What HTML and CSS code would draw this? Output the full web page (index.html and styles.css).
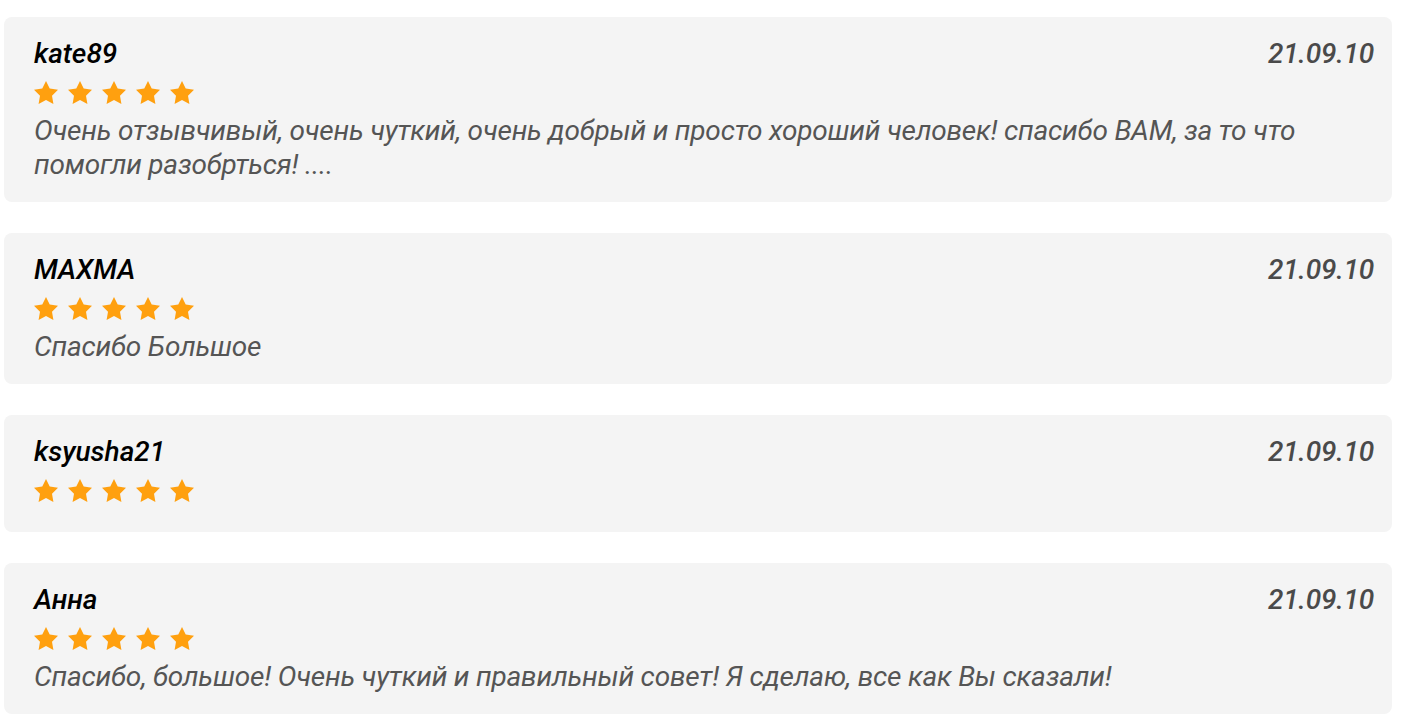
FILE: index.html
```html
<!DOCTYPE html>
<html lang="ru">
<head>
<meta charset="utf-8">
<link rel="stylesheet" href="styles.css">
</head>
<body>
<div class="list">
  <div class="card">
    <div class="head"><span class="name">kate89</span><span class="date">21.09.10</span></div>
    <div class="stars">
      <svg class="star" viewBox="2 2 20 19.02"><polygon points="12,2 15.09,8.26 22,9.27 17,14.14 18.18,21.02 12,17.77 5.82,21.02 7,14.14 2,9.27 8.91,8.26"/></svg>
      <svg class="star" viewBox="2 2 20 19.02"><polygon points="12,2 15.09,8.26 22,9.27 17,14.14 18.18,21.02 12,17.77 5.82,21.02 7,14.14 2,9.27 8.91,8.26"/></svg>
      <svg class="star" viewBox="2 2 20 19.02"><polygon points="12,2 15.09,8.26 22,9.27 17,14.14 18.18,21.02 12,17.77 5.82,21.02 7,14.14 2,9.27 8.91,8.26"/></svg>
      <svg class="star" viewBox="2 2 20 19.02"><polygon points="12,2 15.09,8.26 22,9.27 17,14.14 18.18,21.02 12,17.77 5.82,21.02 7,14.14 2,9.27 8.91,8.26"/></svg>
      <svg class="star" viewBox="2 2 20 19.02"><polygon points="12,2 15.09,8.26 22,9.27 17,14.14 18.18,21.02 12,17.77 5.82,21.02 7,14.14 2,9.27 8.91,8.26"/></svg>
    </div>
    <p class="text">Очень отзывчивый, очень чуткий, очень добрый и просто хороший человек! спасибо ВАМ, за то что помогли разобрться! ....</p>
  </div>
  <div class="card">
    <div class="head"><span class="name">МАХМА</span><span class="date">21.09.10</span></div>
    <div class="stars">
      <svg class="star" viewBox="2 2 20 19.02"><polygon points="12,2 15.09,8.26 22,9.27 17,14.14 18.18,21.02 12,17.77 5.82,21.02 7,14.14 2,9.27 8.91,8.26"/></svg>
      <svg class="star" viewBox="2 2 20 19.02"><polygon points="12,2 15.09,8.26 22,9.27 17,14.14 18.18,21.02 12,17.77 5.82,21.02 7,14.14 2,9.27 8.91,8.26"/></svg>
      <svg class="star" viewBox="2 2 20 19.02"><polygon points="12,2 15.09,8.26 22,9.27 17,14.14 18.18,21.02 12,17.77 5.82,21.02 7,14.14 2,9.27 8.91,8.26"/></svg>
      <svg class="star" viewBox="2 2 20 19.02"><polygon points="12,2 15.09,8.26 22,9.27 17,14.14 18.18,21.02 12,17.77 5.82,21.02 7,14.14 2,9.27 8.91,8.26"/></svg>
      <svg class="star" viewBox="2 2 20 19.02"><polygon points="12,2 15.09,8.26 22,9.27 17,14.14 18.18,21.02 12,17.77 5.82,21.02 7,14.14 2,9.27 8.91,8.26"/></svg>
    </div>
    <p class="text">Спасибо Большое</p>
  </div>
  <div class="card">
    <div class="head"><span class="name">ksyusha21</span><span class="date">21.09.10</span></div>
    <div class="stars">
      <svg class="star" viewBox="2 2 20 19.02"><polygon points="12,2 15.09,8.26 22,9.27 17,14.14 18.18,21.02 12,17.77 5.82,21.02 7,14.14 2,9.27 8.91,8.26"/></svg>
      <svg class="star" viewBox="2 2 20 19.02"><polygon points="12,2 15.09,8.26 22,9.27 17,14.14 18.18,21.02 12,17.77 5.82,21.02 7,14.14 2,9.27 8.91,8.26"/></svg>
      <svg class="star" viewBox="2 2 20 19.02"><polygon points="12,2 15.09,8.26 22,9.27 17,14.14 18.18,21.02 12,17.77 5.82,21.02 7,14.14 2,9.27 8.91,8.26"/></svg>
      <svg class="star" viewBox="2 2 20 19.02"><polygon points="12,2 15.09,8.26 22,9.27 17,14.14 18.18,21.02 12,17.77 5.82,21.02 7,14.14 2,9.27 8.91,8.26"/></svg>
      <svg class="star" viewBox="2 2 20 19.02"><polygon points="12,2 15.09,8.26 22,9.27 17,14.14 18.18,21.02 12,17.77 5.82,21.02 7,14.14 2,9.27 8.91,8.26"/></svg>
    </div>
  </div>
  <div class="card">
    <div class="head"><span class="name">Анна</span><span class="date">21.09.10</span></div>
    <div class="stars">
      <svg class="star" viewBox="2 2 20 19.02"><polygon points="12,2 15.09,8.26 22,9.27 17,14.14 18.18,21.02 12,17.77 5.82,21.02 7,14.14 2,9.27 8.91,8.26"/></svg>
      <svg class="star" viewBox="2 2 20 19.02"><polygon points="12,2 15.09,8.26 22,9.27 17,14.14 18.18,21.02 12,17.77 5.82,21.02 7,14.14 2,9.27 8.91,8.26"/></svg>
      <svg class="star" viewBox="2 2 20 19.02"><polygon points="12,2 15.09,8.26 22,9.27 17,14.14 18.18,21.02 12,17.77 5.82,21.02 7,14.14 2,9.27 8.91,8.26"/></svg>
      <svg class="star" viewBox="2 2 20 19.02"><polygon points="12,2 15.09,8.26 22,9.27 17,14.14 18.18,21.02 12,17.77 5.82,21.02 7,14.14 2,9.27 8.91,8.26"/></svg>
      <svg class="star" viewBox="2 2 20 19.02"><polygon points="12,2 15.09,8.26 22,9.27 17,14.14 18.18,21.02 12,17.77 5.82,21.02 7,14.14 2,9.27 8.91,8.26"/></svg>
    </div>
    <p class="text">Спасибо, большое! Очень чуткий и правильный совет! Я сделаю, все как Вы сказали!</p>
  </div>
</div>
</body>
</html>
```
FILE: styles.css
```css
html, body {
  margin: 0;
  padding: 0;
  background: #ffffff;
}
body {
  font-family: Roboto, "Noto Sans", sans-serif;
}
.list {
  display: flex;
  flex-direction: column;
  gap: 31px;
  padding: 17px 22px 0 4px;
}
.card {
  background: #f4f4f4;
  border-radius: 8px;
  padding: 20px 18px 20px 30px;
}
.head {
  display: flex;
  justify-content: space-between;
  align-items: center;
  height: 34px;
  font-style: italic;
  font-weight: 500;
  font-size: 28px;
  line-height: 34px;
}
.name {
  color: #000000;
}
.date {
  color: #4a4a4a;
  letter-spacing: -0.2px;
}
.stars {
  display: flex;
  align-items: center;
  gap: 10px;
  height: 43px;
}
.star {
  width: 24px;
  height: 23px;
  fill: #ffa00f;
}
.text {
  margin: 0;
  font-style: italic;
  font-size: 28px;
  line-height: 34px;
  letter-spacing: -0.2px;
  color: #555555;
}
```
